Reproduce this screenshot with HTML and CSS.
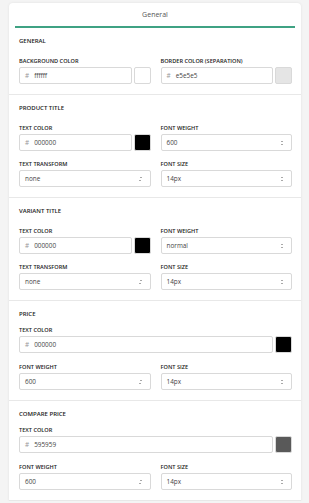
FILE: index.html
```html
<!DOCTYPE html>
<html lang="en">
<head>
    <meta charset="UTF-8">
    <meta name="viewport" content="width=device-width, initial-scale=1.0">
    <title>Style settings</title>
    <link rel="stylesheet" href="styles.css">
</head>
<body>

<div class="card">
    <div class="tabs">
        <div class="tab active">General</div>
    </div>

    <div class="section">
        <h2>General</h2>
        <div class="grid">
            <div class="field">
                <label>Background color</label>
                <div class="color-row">
                    <div class="input"><span class="hash">#</span>ffffff</div>
                    <div class="swatch" style="background: #ffffff;"></div>
                </div>
            </div>
            <div class="field">
                <label>Border color (separation)</label>
                <div class="color-row">
                    <div class="input"><span class="hash">#</span>e5e5e5</div>
                    <div class="swatch" style="background: #e5e5e5;"></div>
                </div>
            </div>
        </div>
    </div>

    <div class="section">
        <h2>Product title</h2>
        <div class="grid">
            <div class="field">
                <label>Text color</label>
                <div class="color-row">
                    <div class="input"><span class="hash">#</span>000000</div>
                    <div class="swatch" style="background: #000000;"></div>
                </div>
            </div>
            <div class="field">
                <label>Font weight</label>
                <div class="select">600<span class="arrows"></span></div>
            </div>
            <div class="field">
                <label>Text transform</label>
                <div class="select">none<span class="arrows"></span></div>
            </div>
            <div class="field">
                <label>Font size</label>
                <div class="select">14px<span class="arrows"></span></div>
            </div>
        </div>
    </div>

    <div class="section">
        <h2>Variant title</h2>
        <div class="grid">
            <div class="field">
                <label>Text color</label>
                <div class="color-row">
                    <div class="input"><span class="hash">#</span>000000</div>
                    <div class="swatch" style="background: #000000;"></div>
                </div>
            </div>
            <div class="field">
                <label>Font weight</label>
                <div class="select">normal<span class="arrows"></span></div>
            </div>
            <div class="field">
                <label>Text transform</label>
                <div class="select">none<span class="arrows"></span></div>
            </div>
            <div class="field">
                <label>Font size</label>
                <div class="select">14px<span class="arrows"></span></div>
            </div>
        </div>
    </div>

    <div class="section compact">
        <h2>Price</h2>
        <div class="field full">
            <label>Text color</label>
            <div class="color-row">
                <div class="input"><span class="hash">#</span>000000</div>
                <div class="swatch" style="background: #000000;"></div>
            </div>
        </div>
        <div class="grid">
            <div class="field">
                <label>Font weight</label>
                <div class="select">600<span class="arrows"></span></div>
            </div>
            <div class="field">
                <label>Font size</label>
                <div class="select">14px<span class="arrows"></span></div>
            </div>
        </div>
    </div>

    <div class="section compact">
        <h2>Compare price</h2>
        <div class="field full">
            <label>Text color</label>
            <div class="color-row">
                <div class="input"><span class="hash">#</span>595959</div>
                <div class="swatch" style="background: #595959;"></div>
            </div>
        </div>
        <div class="grid">
            <div class="field">
                <label>Font weight</label>
                <div class="select">600<span class="arrows"></span></div>
            </div>
            <div class="field">
                <label>Font size</label>
                <div class="select">14px<span class="arrows"></span></div>
            </div>
        </div>
    </div>
</div>

</body>
</html>
```

FILE: styles.css
```css
body {
    font-family: "Open Sans", Arial, sans-serif;
    background-color: #f4f4f4;
    color: #333;
    margin: 0;
    padding: 3px 8px 0 9px;
}

.card {
    background-color: #fff;
    border-radius: 4px 4px 0 0;
    box-shadow: 0 0 3px rgba(0, 0, 0, 0.08);
}

.tabs {
    padding: 0 6px;
}

.tab {
    height: 23px;
    line-height: 23px;
    text-align: center;
    font-size: 7px;
    color: #555;
    border-bottom: 2px solid #3fa283;
}

.section {
    padding: 8px 9px 10px 10px;
    border-bottom: 1px solid #e8e8e8;
}

h2 {
    margin: 0 0 10px;
    font-size: 6px;
    line-height: 10px;
    font-weight: 600;
    text-transform: uppercase;
    color: #222;
}

.compact h2 {
    margin-bottom: 6px;
}

.grid {
    display: grid;
    grid-template-columns: 1fr 1fr;
    column-gap: 10px;
    row-gap: 8px;
}

.full {
    margin-bottom: 9px;
}

label {
    display: block;
    height: 10px;
    line-height: 10px;
    margin-bottom: 1px;
    font-size: 5.6px;
    font-weight: 600;
    text-transform: uppercase;
    color: #222;
}

.color-row {
    display: flex;
    gap: 2px;
}

.input, .select {
    box-sizing: border-box;
    height: 17px;
    line-height: 15px;
    border: 1px solid #d9d9d9;
    border-radius: 2px;
    font-size: 6.4px;
    color: #444;
    background-color: #fff;
}

.input {
    flex: 1;
    padding-left: 5px;
}

.hash {
    color: #999;
    margin-right: 5px;
}

.swatch {
    box-sizing: border-box;
    width: 17px;
    height: 17px;
    border: 1px solid #d9d9d9;
    border-radius: 2px;
}

.select {
    position: relative;
    padding-left: 5px;
}

.arrows {
    position: absolute;
    right: 8px;
    top: 6px;
    width: 0;
    height: 0;
    border-left: 1.5px solid transparent;
    border-right: 1.5px solid transparent;
    border-bottom: 1.5px solid #555;
}

.arrows::after {
    content: "";
    position: absolute;
    left: -1.5px;
    top: 2.5px;
    border-left: 1.5px solid transparent;
    border-right: 1.5px solid transparent;
    border-top: 1.5px solid #555;
}
```
